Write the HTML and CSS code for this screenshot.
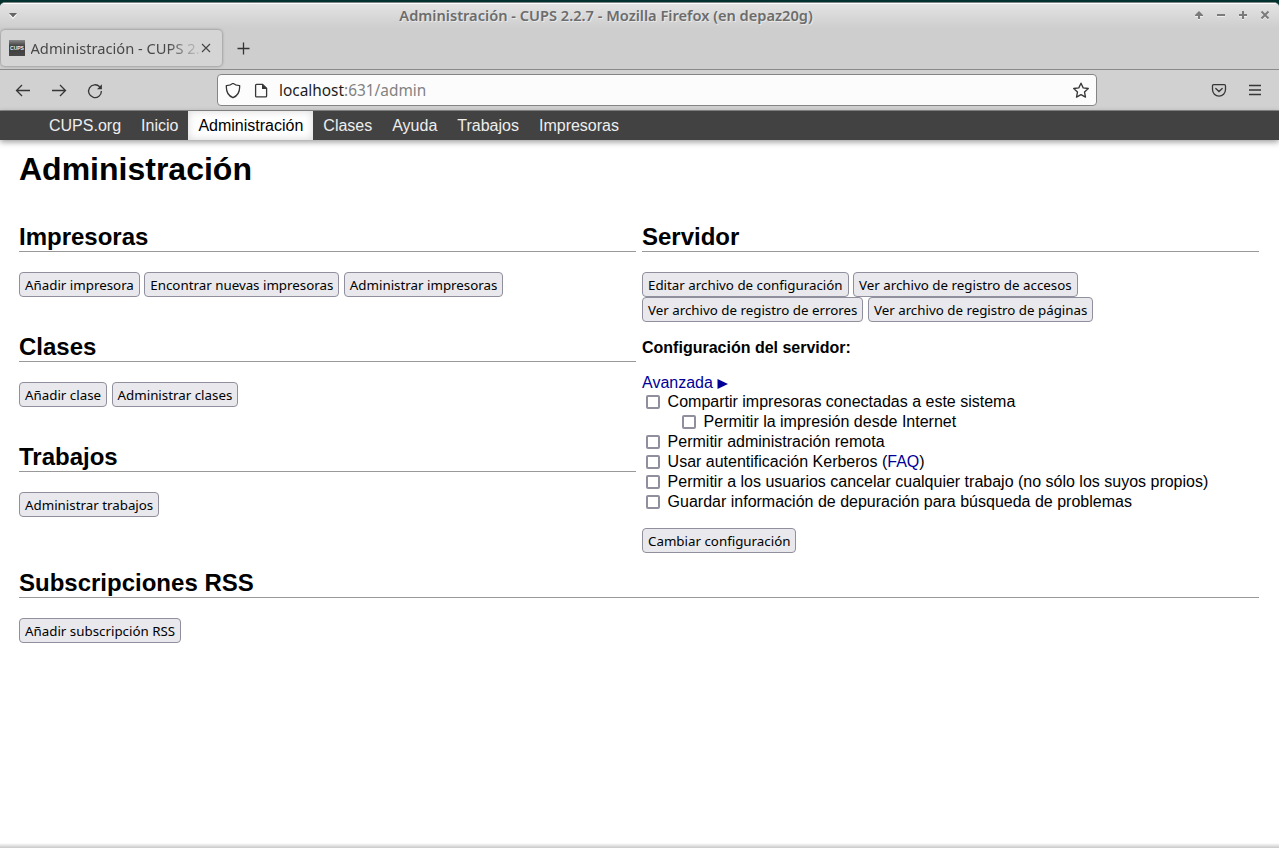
FILE: index.html
```html
<!DOCTYPE html>
<html lang="es">
<head>
<meta charset="utf-8">
<title>Administración - CUPS 2.2.7</title>
<link rel="stylesheet" href="styles.css">
</head>
<body>
<div class="desktop">
<div class="window">
  <header class="titlebar">
    <svg class="menu-arrow" width="10" height="8" viewBox="0 0 10 8"><path d="M1 2.5h8L5 7z" fill="#fff"/><path d="M1 1h8L5 5.5z" fill="#666"/></svg>
    <div class="window-title">Administración - CUPS 2.2.7 - Mozilla Firefox (en depaz20g)</div>
    <div class="controls">
      <svg width="10" height="10" viewBox="0 0 10 10"><path d="M1 5 5 1l4 4v1H6v3H4V6H1z" fill="#7b7b7b"/></svg>
      <svg width="10" height="10" viewBox="0 0 10 10"><path d="M1 5h8" stroke="#7b7b7b" stroke-width="2"/></svg>
      <svg width="10" height="10" viewBox="0 0 10 10"><path d="M1 5h8M5 1v8" stroke="#7b7b7b" stroke-width="2"/></svg>
      <svg width="10" height="10" viewBox="0 0 10 10"><path d="m1.500 1.500 7 7m0-7-7 7" stroke="#7b7b7b" stroke-width="2"/></svg>
    </div>
  </header>
  <div class="tabs">
    <div class="tab">
      <span class="favicon">CUPS</span>
      <span class="tab-title">Administración - CUPS 2.</span>
      <svg width="10" height="10" viewBox="0 0 10 10"><path d="m1 1 8 8m0-8-8 8" stroke="#444" stroke-width="1.100"/></svg>
    </div>
    <svg class="new-tab" width="13" height="13" viewBox="0 0 13 13"><path d="M.5 6.500h12M6.500.5v12" stroke="#333" stroke-width="1.300"/></svg>
  </div>
  <div class="toolbar">
    <div class="history">
      <svg width="16" height="16" viewBox="0 0 16 16"><path d="M15 7.500H1.500M7 2 1.500 7.500 7 13"/></svg>
      <svg width="16" height="16" viewBox="0 0 16 16"><path d="M1 7.500h13.500M9 2l5.500 5.500L9 13"/></svg>
      <svg width="16" height="16" viewBox="0 0 16 16"><path d="M12.700 3.800A6.400 6.400 0 1 0 14.400 8"/><path d="M14.900 1.300v4.900H10z" class="solid"/></svg>
    </div>
    <div class="urlbar">
      <svg width="16" height="16" viewBox="0 0 16 16"><path d="M8 .3C6.500 1.600 4 2.500 1.400 2.700 1 8.500 3 12.700 8 14.700 13 12.700 15 8.500 14.600 2.700 12 2.500 9.500 1.600 8 .3z"/></svg>
      <svg class="page-icon" width="16" height="16" viewBox="0 0 16 16"><path d="M3.600 1.300h6l4 4v7.600a1 1 0 0 1-1 1h-9a1 1 0 0 1-1-1V2.300a1 1 0 0 1 1-1z"/><path d="M9 1.100v5h5z" class="solid"/></svg>
      <span class="address">localhost<span class="path">:631/admin</span></span>
      <svg width="18" height="18" viewBox="0 0 18 18"><path d="m9 1.200 2.200 4.700 5.100.6-3.800 3.500 1 5.100L9 12.600l-4.500 2.500 1-5.100L1.700 6.500l5.100-.6z" stroke-linejoin="round"/></svg>
    </div>
    <div class="tools">
      <svg width="16" height="16" viewBox="0 0 16 16"><path d="M2.700 1.700h10.600a1.200 1.200 0 0 1 1.200 1.200v3.700a6.500 6.500 0 0 1-13 0V2.900a1.200 1.200 0 0 1 1.200-1.200z"/><path d="M4.800 5.500 8 8.500l3.200-3" stroke-linecap="round"/></svg>
      <svg width="14" height="16" viewBox="0 0 14 16"><path d="M1 2.500h12M1 7h12M1 11.500h12"/></svg>
    </div>
  </div>
  <main class="page">
    <nav class="nav">
      <a>CUPS.org</a><a>Inicio</a><a class="active">Administración</a><a>Clases</a><a>Ayuda</a><a>Trabajos</a><a>Impresoras</a>
    </nav>
    <div class="content">
      <h1>Administración</h1>
      <div class="columns">
        <div>
          <section class="block"><h2>Impresoras</h2>
            <button>Añadir impresora</button> <button>Encontrar nuevas impresoras</button> <button>Administrar impresoras</button>
          </section>
          <section class="block"><h2>Clases</h2>
            <button>Añadir clase</button> <button>Administrar clases</button>
          </section>
          <section class="block"><h2>Trabajos</h2>
            <button>Administrar trabajos</button>
          </section>
        </div>
        <section class="server"><h2>Servidor</h2>
          <button>Editar archivo de configuración</button> <button>Ver archivo de registro de accesos</button><br>
          <button>Ver archivo de registro de errores</button> <button>Ver archivo de registro de páginas</button>
          <p class="subtitle">Configuración del servidor:</p>
          <div class="advanced"><a>Avanzada <svg width="11" height="10" viewBox="0 0 11 10"><path d="M.5 0v10L11 5z" fill="#009"/></svg></a></div>
          <label class="option"><input type="checkbox"><span>Compartir impresoras conectadas a este sistema</span></label>
          <label class="option nested"><input type="checkbox"><span>Permitir la impresión desde Internet</span></label>
          <label class="option"><input type="checkbox"><span>Permitir administración remota</span></label>
          <label class="option"><input type="checkbox"><span>Usar autentificación Kerberos (<a>FAQ</a>)</span></label>
          <label class="option"><input type="checkbox"><span>Permitir a los usuarios cancelar cualquier trabajo (no sólo los suyos propios)</span></label>
          <label class="option"><input type="checkbox"><span>Guardar información de depuración para búsqueda de problemas</span></label>
          <div class="submit"><button>Cambiar configuración</button></div>
        </section>
      </div>
      <section><h2>Subscripciones RSS</h2>
        <button>Añadir subscripción RSS</button>
      </section>
    </div>
    <div class="page-footer"></div>
  </main>
</div>
</div>
</body>
</html>
```
FILE: styles.css
```css
* { box-sizing: border-box; }
body { margin: 0; font: 16px/18px "Liberation Sans", Arial, sans-serif; color: #000; }
svg { display: block; flex: none; }
.desktop { height: 848px; padding-top: 2px; background: #03312f; overflow: hidden; }
.window { height: 846px; display: flex; flex-direction: column; background: #cecece; border-top: 1px solid #7d8583; border-radius: 5px 5px 0 0; overflow: hidden; }
.titlebar { height: 25px; flex: none; display: flex; align-items: center; padding: 0 9px 0 8px; border-top: 1px solid #fff; background: linear-gradient(#e3e3e3, #cecece); font: 600 14.62px/22px "Noto Sans", sans-serif; color: #6c6c6c; text-shadow: 1px 1px #e9e9e9; }
.window-title { flex: 1; text-align: center; white-space: nowrap; padding-bottom: 2px; }
.controls { display: flex; gap: 12px; margin-top: -2px; }
.controls svg { filter: drop-shadow(0 1px 0 #eee); }
.tabs { height: 41px; flex: none; display: flex; align-items: center; padding-left: 1px; font: 14.67px/20px "Noto Sans", sans-serif; color: #484848; }
.tab { width: 221px; height: 36px; margin-bottom: 1px; padding: 0 11px 0 8px; display: flex; align-items: center; background: #d5d5d5; border-radius: 4px; box-shadow: 0 0 3px #777; }
.favicon { width: 16px; height: 16px; flex: none; background: linear-gradient(#888 0, #3c3c3c 40%, #484848); color: #eee; font: bold 5px/16px "Liberation Sans", sans-serif; text-align: center; }
.tab-title { width: 170.5px; flex: none; margin-left: 5.5px; white-space: nowrap; mask-image: linear-gradient(to right, #000 80%, transparent 101%); }
.new-tab { margin: 0 0 1px 15px; }
.toolbar { height: 42px; flex: none; display: flex; align-items: center; border: solid #8a8a8a; border-width: 1px 0; background: #d1d1d1; padding: 0 17px 0 15px; }
.toolbar svg { fill: none; stroke: #363636; stroke-width: 1.3; margin-top: 1px; }
.toolbar .solid { fill: #363636; stroke: none; }
.history { display: flex; gap: 20px; width: 202px; }
.urlbar { width: 880px; height: 32px; display: flex; align-items: center; padding: 0 6px 0 7px; border: 1px solid #858585; border-radius: 4px; background: #fcfcfc; font: 15.4px/22px "Noto Sans", sans-serif; color: #1c1c1c; }
.urlbar .page-icon { margin: 1px 10px 0 12px; }
.address { flex: 1; padding-top: 2px; }
.path { color: #818181; }
.tools { flex: 1; display: flex; justify-content: flex-end; gap: 21px; }
.page { flex: 1; background: #fff; display: flex; flex-direction: column; }
.nav { height: 29px; flex: none; display: flex; padding-left: 39px; background: #424242; box-shadow: 0 2px 6px rgba(0,0,0,.4); }
.nav a { padding: 0 10px; line-height: 29px; color: #eee; }
.nav .active { background: #fff; color: #000; box-shadow: inset 0 0 8px rgba(0,0,0,.16); }
.content { flex: 1; padding: 11px 20px 0 19px; }
h1 { margin: 0; font-size: 32px; line-height: 36px; }
h2 { margin: 0 0 20px; height: 29px; font-size: 24px; line-height: 28px; border-bottom: 1px solid #999; }
.columns { display: grid; grid-template-columns: 1fr 1fr; gap: 6px; padding-top: 36px; height: 382px; }
.block { height: 110px; }
button { height: 25px; margin: 0; padding: 1px 5px 0; border: 1px solid #8f8f9d; border-radius: 4px; background: #e9e9ed; color: #000; font: 13.34px/22px "Noto Sans", sans-serif; vertical-align: top; }
.server { line-height: 25px; }
.subtitle { margin: 17px 0; line-height: 18px; font-weight: bold; }
a { color: #009; }
.advanced { line-height: 18px; }
.advanced svg { display: inline-block; vertical-align: -1px; }
.option { height: 20px; display: flex; align-items: center; padding-left: 4px; line-height: 20px; }
.nested { padding-left: 40px; }
.option input { appearance: none; width: 14px; height: 14px; margin: 0 7.6px 0 0; border: 2px solid #8f8f9d; border-radius: 2px; background: #fff; }
.submit { padding-top: 16px; }
.page-footer { height: 5px; background: linear-gradient(#fff, #c8c8c8); }
```
